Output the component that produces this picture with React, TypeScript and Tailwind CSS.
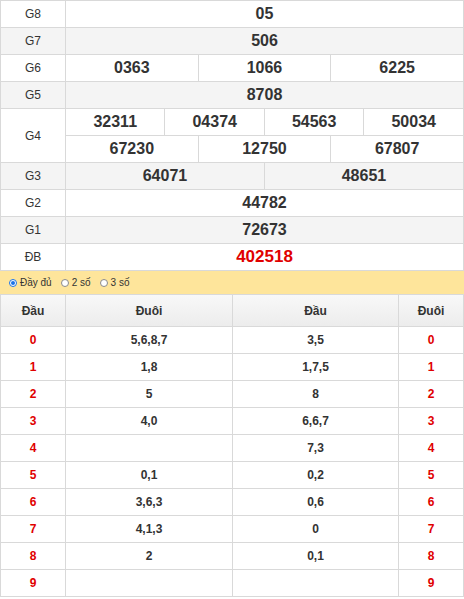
import React from 'react';

const prizes: { label: string; nums: string[]; alt?: boolean; special?: boolean }[] = [
  { label: 'G8', nums: ['05'] },
  { label: 'G7', nums: ['506'], alt: true },
  { label: 'G6', nums: ['0363', '1066', '6225'] },
  { label: 'G5', nums: ['8708'], alt: true },
];

const rest: { label: string; nums: string[]; alt?: boolean; special?: boolean }[] = [
  { label: 'G3', nums: ['64071', '48651'], alt: true },
  { label: 'G2', nums: ['44782'] },
  { label: 'G1', nums: ['72673'], alt: true },
  { label: 'ĐB', nums: ['402518'], special: true },
];

const loto = [
  { d: '0', tail: '5,6,8,7', head: '3,5' },
  { d: '1', tail: '1,8', head: '1,7,5' },
  { d: '2', tail: '5', head: '8' },
  { d: '3', tail: '4,0', head: '6,6,7' },
  { d: '4', tail: '', head: '7,3' },
  { d: '5', tail: '0,1', head: '0,2' },
  { d: '6', tail: '3,6,3', head: '0,6' },
  { d: '7', tail: '4,1,3', head: '0' },
  { d: '8', tail: '2', head: '0,1' },
  { d: '9', tail: '', head: '' },
];

const cell = 'border border-[#d9d9d9] text-center p-0 h-[27px]';

const PrizeRow = ({ label, nums, alt, special }: { label: string; nums: string[]; alt?: boolean; special?: boolean }) => (
  <tr className={alt ? 'bg-[#f4f4f4]' : 'bg-white'}>
    <td className={`${cell} text-[12px] text-[#333]`}>{label}</td>
    {nums.map((n, i) => (
      <td
        key={i}
        colSpan={12 / nums.length}
        className={`${cell} font-bold ${special ? 'text-[17px] text-[#e00000]' : 'text-[16px] text-[#333]'}`}
      >
        {n}
      </td>
    ))}
  </tr>
);

const Radio = ({ checked, label }: { checked?: boolean; label: string }) => (
  <label className="flex items-center gap-[3px]">
    <span
      className={`w-[8px] h-[8px] rounded-full border flex items-center justify-center bg-white ${
        checked ? 'border-[#1a73e8]' : 'border-[#8a8a8a]'
      }`}
    >
      {checked && <span className="w-[4px] h-[4px] rounded-full bg-[#1a73e8]" />}
    </span>
    <span>{label}</span>
  </label>
);

export default function App() {
  return (
    <div className="w-[464px] bg-white text-[#333]" style={{ fontFamily: '"Liberation Sans", Arial, sans-serif' }}>
      <table className="w-full table-fixed border-collapse">
        <colgroup>
          <col className="w-[65px]" />
          {Array.from({ length: 12 }).map((_, i) => (
            <col key={i} />
          ))}
        </colgroup>
        <tbody>
          {prizes.map((p) => (
            <PrizeRow key={p.label} {...p} />
          ))}
          <tr className="bg-white">
            <td rowSpan={2} className={`${cell} text-[12px]`}>
              G4
            </td>
            {['32311', '04374', '54563', '50034'].map((n) => (
              <td key={n} colSpan={3} className={`${cell} font-bold text-[16px]`}>
                {n}
              </td>
            ))}
          </tr>
          <tr className="bg-white">
            {['67230', '12750', '67807'].map((n) => (
              <td key={n} colSpan={4} className={`${cell} font-bold text-[16px]`}>
                {n}
              </td>
            ))}
          </tr>
          {rest.map((p) => (
            <PrizeRow key={p.label} {...p} />
          ))}
        </tbody>
      </table>

      <div className="h-[23px] bg-[#fee59b] flex items-center gap-[9px] pl-[9px] text-[10px] text-[#333]">
        <Radio checked label="Đầy đủ" />
        <Radio label="2 số" />
        <Radio label="3 số" />
      </div>

      <table className="w-full table-fixed border-collapse">
        <colgroup>
          <col className="w-[65px]" />
          <col className="w-[167px]" />
          <col className="w-[166px]" />
          <col />
        </colgroup>
        <thead>
          <tr className="bg-gradient-to-b from-[#f8f8f8] to-[#ececec]">
            {['Đầu', 'Đuôi', 'Đầu', 'Đuôi'].map((h, i) => (
              <th key={i} className="border border-[#d9d9d9] h-[32px] text-[12px] font-bold text-[#333]">
                {h}
              </th>
            ))}
          </tr>
        </thead>
        <tbody>
          {loto.map((r) => (
            <tr key={r.d} className="bg-white">
              <td className={`${cell} text-[12px] font-bold text-[#e00000]`}>{r.d}</td>
              <td className={`${cell} text-[12px] font-bold text-[#333]`}>{r.tail}</td>
              <td className={`${cell} text-[12px] font-bold text-[#333]`}>{r.head}</td>
              <td className={`${cell} text-[12px] font-bold text-[#e00000]`}>{r.d}</td>
            </tr>
          ))}
        </tbody>
      </table>
    </div>
  );
}
